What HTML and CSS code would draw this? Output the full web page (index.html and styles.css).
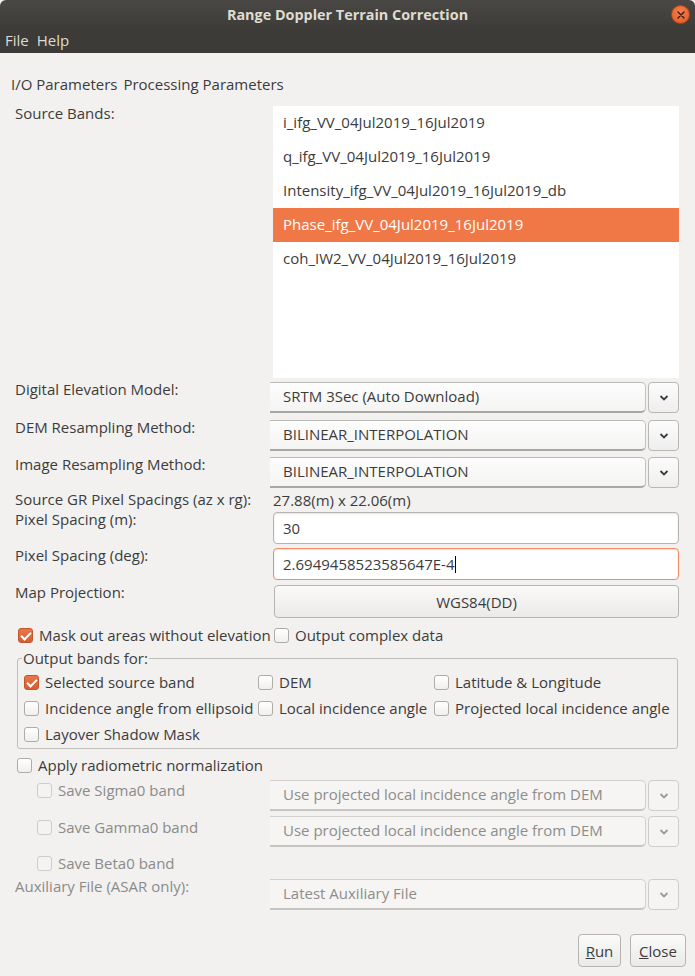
FILE: index.html
```html
<!DOCTYPE html>
<html>
<head>
<meta charset="utf-8">
<title>Range Doppler Terrain Correction</title>
<link rel="stylesheet" href="styles.css">
</head>
<body>
<div class="window">
  <header class="titlebar">
    <span class="title">Range Doppler Terrain Correction</span>
    <span class="close-btn"><svg width="8" height="8" viewBox="0 0 8 8"><path d="M1 1L7 7M7 1L1 7" stroke="#3a1a0c" stroke-width="1.4" stroke-linecap="round"/></svg></span>
  </header>
  <nav class="menubar"><span>File</span><span>Help</span></nav>

  <main class="content">
    <div class="tabs"><span>I/O Parameters</span><span>Processing Parameters</span></div>

    <div class="row r-bands">
      <div class="label">Source Bands:</div>
      <ul class="bandlist">
        <li>i_ifg_VV_04Jul2019_16Jul2019</li>
        <li>q_ifg_VV_04Jul2019_16Jul2019</li>
        <li>Intensity_ifg_VV_04Jul2019_16Jul2019_db</li>
        <li class="selected">Phase_ifg_VV_04Jul2019_16Jul2019</li>
        <li>coh_IW2_VV_04Jul2019_16Jul2019</li>
      </ul>
    </div>

    <div class="row r-dem">
      <div class="label">Digital Elevation Model:</div>
      <div class="combo"><div class="combo-field">SRTM 3Sec (Auto Download)</div><div class="combo-arrow"><svg width="10" height="6" viewBox="0 0 10 6"><path d="M1.5 1L5 4.5L8.5 1" fill="none" stroke="#3c3c3c" stroke-width="1.8"/></svg></div></div>
    </div>
    <div class="row r-demres">
      <div class="label">DEM Resampling Method:</div>
      <div class="combo"><div class="combo-field">BILINEAR_INTERPOLATION</div><div class="combo-arrow"><svg width="10" height="6" viewBox="0 0 10 6"><path d="M1.5 1L5 4.5L8.5 1" fill="none" stroke="#3c3c3c" stroke-width="1.8"/></svg></div></div>
    </div>
    <div class="row r-imgres">
      <div class="label">Image Resampling Method:</div>
      <div class="combo"><div class="combo-field">BILINEAR_INTERPOLATION</div><div class="combo-arrow"><svg width="10" height="6" viewBox="0 0 10 6"><path d="M1.5 1L5 4.5L8.5 1" fill="none" stroke="#3c3c3c" stroke-width="1.8"/></svg></div></div>
    </div>
    <div class="row r-gr">
      <div class="label">Source GR Pixel Spacings (az x rg):</div>
      <div class="value">27.88(m) x 22.06(m)</div>
    </div>
    <div class="row r-psm">
      <div class="label">Pixel Spacing (m):</div>
      <div class="field">30</div>
    </div>
    <div class="row r-psd">
      <div class="label">Pixel Spacing (deg):</div>
      <div class="field focused">2.6949458523585647E-4<span class="caret"></span></div>
    </div>
    <div class="row r-map">
      <div class="label">Map Projection:</div>
      <div class="button wide">WGS84(DD)</div>
    </div>

    <div class="row r-mask">
      <label class="check"><span class="box checked"></span>Mask out areas without elevation</label>
      <label class="check c-complex"><span class="box"></span>Output complex data</label>
    </div>

    <fieldset class="group">
      <legend>Output bands for:</legend>
      <div class="group-grid">
        <label class="check"><span class="box checked"></span>Selected source band</label>
        <label class="check"><span class="box"></span>DEM</label>
        <label class="check"><span class="box"></span>Latitude &amp; Longitude</label>
        <label class="check"><span class="box"></span>Incidence angle from ellipsoid</label>
        <label class="check"><span class="box"></span>Local incidence angle</label>
        <label class="check"><span class="box"></span>Projected local incidence angle</label>
        <label class="check"><span class="box"></span>Layover Shadow Mask</label>
      </div>
    </fieldset>

    <div class="row r-apply">
      <label class="check"><span class="box"></span>Apply radiometric normalization</label>
    </div>
    <div class="row r-sigma">
      <label class="check disabled sub l-sigma"><span class="box"></span>Save Sigma0 band</label>
      <div class="combo disabled"><div class="combo-field">Use projected local incidence angle from DEM</div><div class="combo-arrow"><svg width="10" height="6" viewBox="0 0 10 6"><path d="M1.5 1L5 4.5L8.5 1" fill="none" stroke="#9a9a98" stroke-width="1.8"/></svg></div></div>
    </div>
    <div class="row r-gamma">
      <label class="check disabled sub l-gamma"><span class="box"></span>Save Gamma0 band</label>
      <div class="combo disabled"><div class="combo-field">Use projected local incidence angle from DEM</div><div class="combo-arrow"><svg width="10" height="6" viewBox="0 0 10 6"><path d="M1.5 1L5 4.5L8.5 1" fill="none" stroke="#9a9a98" stroke-width="1.8"/></svg></div></div>
    </div>
    <div class="row r-beta">
      <label class="check disabled sub"><span class="box"></span>Save Beta0 band</label>
    </div>
    <div class="row r-aux">
      <div class="label disabled-text">Auxiliary File (ASAR only):</div>
      <div class="combo disabled"><div class="combo-field">Latest Auxiliary File</div><div class="combo-arrow"><svg width="10" height="6" viewBox="0 0 10 6"><path d="M1.5 1L5 4.5L8.5 1" fill="none" stroke="#9a9a98" stroke-width="1.8"/></svg></div></div>
    </div>

    <div class="actions">
      <div class="button act run"><u>R</u>un</div>
      <div class="button act close"><u>C</u>lose</div>
    </div>
  </main>
</div>
</body>
</html>
```
FILE: styles.css
```css
* { box-sizing: border-box; }
html, body { margin: 0; padding: 0; }
body {
  width: 695px;
  height: 976px;
  overflow: hidden;
  background: #f2f1f0;
  font-family: "Open Sans", "Noto Sans", sans-serif;
  font-size: 15px;
  color: #3c3c3c;
}
.window { width: 695px; height: 976px; display: flex; flex-direction: column; }

.titlebar {
  height: 28px;
  background: linear-gradient(#4a4844, #3d3c38);
  border-radius: 6px 6px 0 0;
  display: flex;
  align-items: center;
  justify-content: center;
  position: relative;
}
.title { color: #dfdbd2; font-weight: bold; font-size: 14.4px; }
.close-btn {
  position: absolute;
  right: 5px;
  top: 5px;
  width: 19px; height: 19px;
  border-radius: 50%;
  background: radial-gradient(circle at 50% 35%, #f3824f, #df5824);
  border: 1px solid #b8451a;
  display: flex; align-items: center; justify-content: center;
}
.menubar {
  height: 25px;
  background: #3c3b37;
  color: #dfdbd2;
  font-size: 15px;
  display: flex;
  gap: 8px;
  padding-left: 5px;
  align-items: center;
  line-height: 1;
}

.content { flex: 1; padding: 0 16px 0 15px; display: flex; flex-direction: column; }

.tabs { margin-top: 22px; height: 19px; line-height: 19px; display: flex; gap: 6px; margin-left: -4px; }

.row { display: grid; grid-template-columns: 255px 409px; align-items: start; }
.label { line-height: 15px; white-space: nowrap; }

.r-bands { margin-top: 12px; }
.bandlist {
  list-style: none; margin: 0 0 0 3px; padding: 0;
  background: #fff; height: 272px;
}
.bandlist li { height: 34px; line-height: 32px; padding-left: 10px; white-space: nowrap; }
.bandlist li.selected { background: #f07746; color: #fff; }

.r-dem { margin-top: 4px; }
.r-demres { margin-top: 7px; }
.r-imgres { margin-top: 6px; }

.combo { display: flex; height: 31px; }
.combo-field {
  width: 376px;
  height: 31px;
  border-top: 1px solid #bcbab5;
  border-right: 1px solid #c4c2bd;
  border-bottom: 2px solid #a9a7a2;
  border-radius: 0 5px 5px 0;
  background: linear-gradient(#fdfdfd, #f4f4f3);
  padding-left: 13px;
  line-height: 27px;
  white-space: nowrap;
  overflow: hidden;
}
.combo-arrow {
  width: 31px;
  height: 31px;
  margin-left: 2px;
  border: 1px solid #b9b7b2;
  border-radius: 4px;
  background: linear-gradient(#fcfcfc, #efeeed);
  display: flex; align-items: center; justify-content: center;
}
.combo.disabled .combo-field { color: #8d8d8b; background: #f6f5f4; border-top-color: #d2d0cc; border-right-color: #d2d0cc; border-bottom-color: #c7c5c1; }
.combo.disabled .combo-arrow { background: #f5f4f3; border-color: #cfcdc9; }

.r-gr { margin-top: 4px; line-height: 16px; }
.value { margin-left: 3px; }

.field {
  margin-left: 3px;
  height: 32px;
  border: 1px solid #b6b4af;
  border-radius: 4px;
  background: #fff;
  box-shadow: inset 0 1px 2px rgba(0,0,0,0.12);
  padding-left: 9px;
  line-height: 30px;
  display: flex; align-items: center;
}
.field.focused { border-color: #ef8d66; }
.caret { display: inline-block; width: 1px; height: 17px; background: #000; margin-left: 1px; }
.r-psm { margin-top: 4px; }
.r-psd { margin-top: 4px; }
.r-map { margin-top: 5px; }

.button {
  height: 33px;
  border: 1px solid #b7b5b0;
  border-radius: 4px;
  background: linear-gradient(#fafaf9, #ebeae8);
  display: flex; align-items: center; justify-content: center;
  color: #3c3c3c;
}
.button.wide { margin-left: 4px; }

.check { display: flex; align-items: center; gap: 6px; white-space: nowrap; line-height: 17px; }
.box {
  width: 15px; height: 15px; flex: none;
  border: 1px solid #aeaca7;
  border-radius: 3px;
  background: linear-gradient(#ffffff, #f0efee);
  position: relative;
}
.box.checked {
  background: linear-gradient(#e8774a, #d65f30);
  border-color: #c0542a;
}
.box.checked::after {
  content: "";
  position: absolute;
  left: 4px; top: 1px;
  width: 4px; height: 8px;
  border: solid #fff;
  border-width: 0 2px 2px 0;
  transform: rotate(45deg);
}
.r-mask { margin-top: 9px; }
.r-mask .check:first-child { margin-left: 3px; }
.c-complex { margin-left: 4px; }

.group {
  margin: 6px 1px 0 2px;
  padding: 2px 0 1px 6px;
  border: 1px solid #c0beb9;
  border-radius: 3px;
  min-width: 0;
}
.group legend { padding: 0 1px; margin-left: -2px; line-height: 17px; }
.group-grid { display: grid; grid-template-columns: 234px 176px 1fr; grid-auto-rows: 26px; }
.group-grid .check { height: 26px; }

.r-apply { margin-top: 8px; }
.r-apply .check { margin-left: 2px; }

.disabled .box { border-color: #cfcdc9; background: #f4f3f2; }
.check.disabled, .disabled-text { color: #8b8b89; }
.sub { margin-left: 22px; }
.r-sigma { margin-top: 6px; }
.l-sigma { margin-top: 2px; }
.r-gamma { margin-top: 5px; }
.l-gamma { margin-top: 3px; }
.r-beta { margin-top: 8px; }
.r-aux { margin-top: 7px; }

.actions { display: flex; justify-content: flex-end; gap: 9px; margin-top: 24px; margin-right: -7px; }
.act { height: 33px; padding: 0 6px; }
.run { width: 43px; }
.close { width: 56px; }
```
